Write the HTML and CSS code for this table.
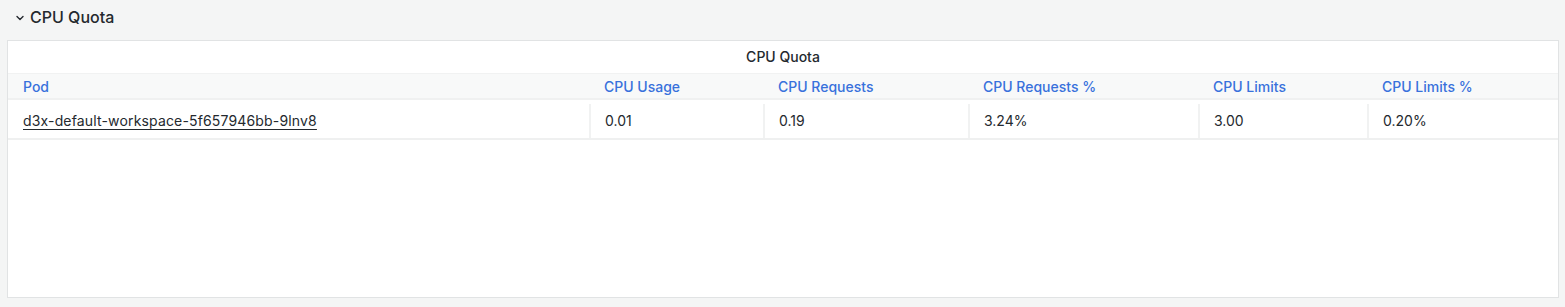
FILE: index.html
```html
<!DOCTYPE html>
<html lang="en">
<head>
    <meta charset="UTF-8">
    <title>CPU Quota</title>
    <link rel="stylesheet" href="styles.css">
</head>
<body>
    <div class="row-title">
        <svg class="chevron" width="8" height="6" viewBox="0 0 8 6">
            <path d="M1 1.5 L4 4.5 L7 1.5" fill="none" stroke="#24292e" stroke-width="1.4" stroke-linecap="round" stroke-linejoin="round"/>
        </svg>
        <span>CPU Quota</span>
    </div>

    <section class="panel">
        <div class="panel-title">CPU Quota</div>
        <div class="table">
            <div class="thead">
                <div class="th">Pod</div>
                <div class="th">CPU Usage</div>
                <div class="th">CPU Requests</div>
                <div class="th">CPU Requests %</div>
                <div class="th">CPU Limits</div>
                <div class="th">CPU Limits %</div>
            </div>
            <div class="tr">
                <div class="td"><a href="#" class="pod-link">d3x-default-workspace-5f657946bb-9lnv8</a></div>
                <div class="td">0.01</div>
                <div class="td">0.19</div>
                <div class="td">3.24%</div>
                <div class="td">3.00</div>
                <div class="td">0.20%</div>
            </div>
        </div>
    </section>
</body>
</html>
```

FILE: styles.css
```css
/* Page */
* {
    margin: 0;
    padding: 0;
    box-sizing: border-box;
}

body {
    font-family: 'Inter', 'Liberation Sans', sans-serif;
    color: #24292e;
    background-color: #f4f5f5;
    padding: 0 6px 0 7px;
}

/* Collapsible row header */
.row-title {
    display: flex;
    align-items: center;
    height: 34px;
    padding-left: 9px;
    font-size: 16px;
    font-weight: 500;
}

.chevron {
    margin-right: 6px;
    margin-top: 2px;
}

/* Panel */
.panel {
    margin-top: 6px;
    height: 258px;
    background-color: #fff;
    border: 1px solid #e1e3e4;
}

.panel-title {
    height: 32px;
    line-height: 32px;
    text-align: center;
    font-size: 14px;
    font-weight: 500;
}

/* Table */
.thead,
.tr {
    display: grid;
    grid-template-columns: 581px 174px 205px 230px 169px 1fr;
}

.thead {
    height: 27px;
    background-color: #f8f9f9;
    border-bottom: 2px solid #f0f1f1;
    border-top: 1px solid #f1f2f2;
}

.th {
    padding-left: 15px;
    line-height: 26px;
    font-size: 14px;
    font-weight: 500;
    color: #3871dc;
}

.tr {
    height: 40px;
    padding-top: 4px;
    border-bottom: 2px solid #eff0f0;
}

.td {
    padding-left: 15px;
    line-height: 33px;
    font-size: 14px;
    border-left: 2px solid #f1f2f2;
}

.td:first-child {
    border-left: none;
}

.td:not(:first-child) {
    padding-left: 14px;
}

.pod-link {
    color: #24292e;
    letter-spacing: 0.16px;
    text-decoration: underline;
    text-underline-offset: 3px;
}
```
